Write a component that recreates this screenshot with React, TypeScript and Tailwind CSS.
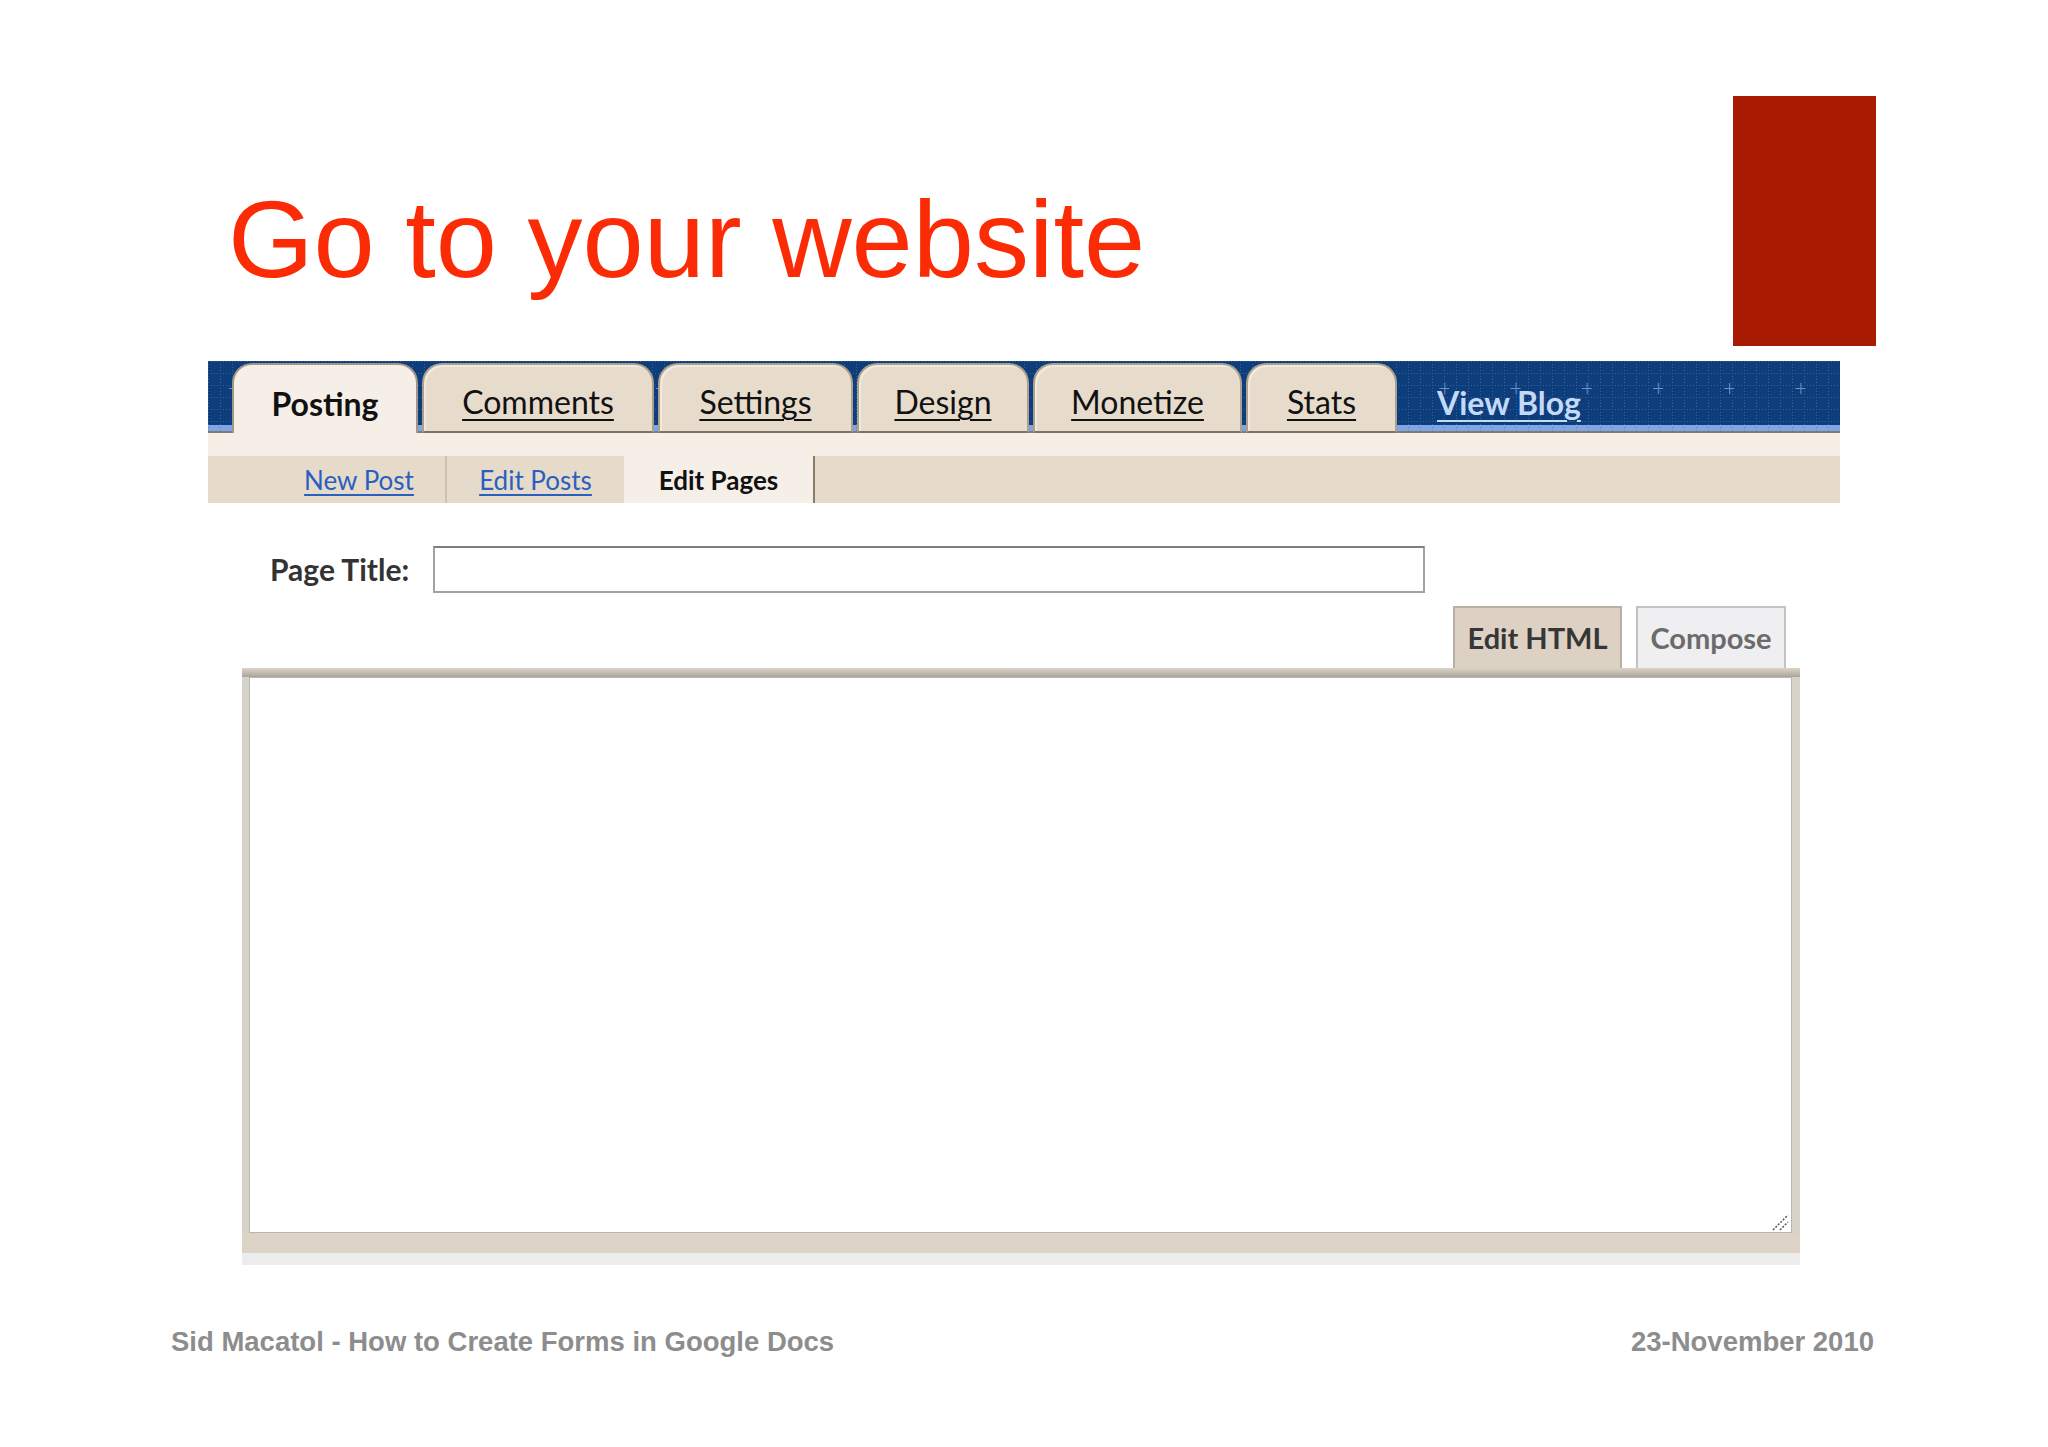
import type { ReactNode } from 'react';

const TABS = [
  { label: 'Posting', width: 'w-[186px]', active: true },
  { label: 'Comments', width: 'w-[232px]', active: false },
  { label: 'Settings', width: 'w-[195px]', active: false },
  { label: 'Design', width: 'w-[172px]', active: false },
  { label: 'Monetize', width: 'w-[209px]', active: false },
  { label: 'Stats', width: 'w-[151px]', active: false },
];

/**
 * Blue grid texture behind the top tabs
 */
function GridTexture() {
  return (
    <svg className="absolute inset-0 h-full w-full" aria-hidden="true">
      <defs>
        <pattern id="grid" width="12" height="12" patternUnits="userSpaceOnUse">
          <path d="M0 0.5H12M0.5 0V12" stroke="#4a74ad" strokeWidth="1" strokeDasharray="1 2" opacity="0.7" />
        </pattern>
        <pattern id="plus" x="13" y="0" width="71.2" height="72" patternUnits="userSpaceOnUse">
          <path d="M8 27.5H18M13.5 22V33" stroke="#6f93c6" strokeWidth="1" />
        </pattern>
      </defs>
      <rect width="100%" height="100%" fill="url(#grid)" />
      <rect width="100%" height="100%" fill="url(#plus)" />
    </svg>
  );
}

function Tab({ label, width, active }: { label: string; width: string; active: boolean }) {
  if (active) {
    return (
      <div
        className={`relative z-10 ${width} flex h-[70px] items-center justify-center rounded-t-[20px] border-2 border-b-0 border-[#a39684] bg-[#f6efe8] pt-[10px] text-[32px] font-bold text-[#111]`}
      >
        {label}
      </div>
    );
  }
  return (
    <div
      className={`relative z-10 ${width} flex h-[70px] items-center justify-center rounded-t-[20px] border-2 border-[#ab9f8d] border-b-[#7d7263] bg-[#e7dccc] pt-[8px] text-[32px] text-[#111] shadow-[inset_2px_2px_0_#f1e9de]`}
    >
      <span className="underline decoration-2 underline-offset-[5px]">{label}</span>
    </div>
  );
}

function SubItem({ className, children }: { className: string; children: ReactNode }) {
  return <div className={`flex h-full items-center justify-center ${className}`}>{children}</div>;
}

export default function App() {
  return (
    <div className="relative h-[1447px] w-[2048px] overflow-hidden bg-white">
      {/* Slide title + red block */}
      <div className="flex h-[361px]">
        <h1 className="pl-[228px] pt-[184px] font-['Liberation_Sans',Arial,sans-serif] text-[110px] font-normal leading-none text-[#fb2c05]">
          Go to your website
        </h1>
        <div className="ml-auto mr-[172px] mt-[96px] h-[250px] w-[143px] bg-[#a91a03]" />
      </div>

      <div className="font-['Lato','DejaVu_Sans',sans-serif]">
        {/* Blue tab bar */}
        <div className="relative ml-[208px] h-[72px] w-[1632px] bg-[#0e3d7c] [background-image:linear-gradient(to_top,#857a6c_0,#857a6c_2px,#7ea6e6_2px,#7ea6e6_8px,transparent_8px)]">
          <GridTexture />
          <div className="relative flex h-full items-end gap-[4px] pl-[24px]">
            {TABS.map((t) => (
              <Tab key={t.label} {...t} />
            ))}
            <a className="relative z-10 mb-[14px] ml-[36px] text-[32px] font-bold leading-none text-[#c3daf6] underline decoration-2 underline-offset-[5px]">
              View Blog
            </a>
          </div>
        </div>

        {/* Light strip */}
        <div className="ml-[208px] h-[23px] w-[1632px] bg-[#f6efe8]" />

        {/* Sub navigation */}
        <div className="ml-[208px] flex h-[47px] w-[1632px] items-stretch bg-[#e6dbcb] text-[26px] leading-none">
          <SubItem className="w-[239px] border-r-2 border-[#cdc0ae] pl-[65px] text-[#2b5fbf]">
            <span className="underline underline-offset-[4px]">New Post</span>
          </SubItem>
          <SubItem className="w-[177px] text-[#2b5fbf]">
            <span className="underline underline-offset-[4px]">Edit Posts</span>
          </SubItem>
          <SubItem className="w-[191px] border-r-2 border-[#8a7b67] bg-[#f6efe8] font-bold text-[#111]">
            Edit Pages
          </SubItem>
        </div>

        {/* Page title row */}
        <div className="mt-[43px] flex items-center">
          <label className="ml-[270px] w-[163px] text-[30px] font-bold text-[#333]">Page Title:</label>
          <div className="h-[47px] w-[992px] border-2 border-[#a3a3a3] border-t-[#7e7e7e] bg-white" />
        </div>

        {/* Editor mode buttons */}
        <div className="mt-[13px] flex justify-end gap-[14px] pr-[262px]">
          <div className="flex h-[62px] w-[169px] items-center justify-center border-2 border-b-0 border-[#b9b0a4] bg-[#ddd1c3] text-[29px] font-bold text-[#363636]">
            Edit HTML
          </div>
          <div className="flex h-[62px] w-[150px] items-center justify-center border-2 border-b-0 border-[#c4c2c2] bg-[#efeef0] text-[29px] font-bold text-[#6b6b6b]">
            Compose
          </div>
        </div>

        {/* Editor box */}
        <div className="ml-[242px] w-[1558px]">
          <div className="bg-[#d6d1c9] pl-[7px] pr-[8px] pt-[9px] [background-image:linear-gradient(#ddd4c8,#a9a49c_9px,transparent_9px)]">
            <div className="relative h-[556px] border border-[#b9b6b0] bg-white">
              <svg className="absolute bottom-[1px] right-[2px] h-[18px] w-[18px]" viewBox="0 0 18 18" aria-hidden="true">
                <path d="M2 17L17 2M9 17L17 9" stroke="#555" strokeWidth="1.5" strokeDasharray="2 1.5" />
              </svg>
            </div>
          </div>
          <div className="h-[20px] bg-[#ddd3c6]" />
          <div className="h-[12px] bg-[#ededed]" />
        </div>
      </div>

      {/* Footer */}
      <div className="mt-[63px] flex justify-between pl-[171px] pr-[174px] font-['Liberation_Sans',Arial,sans-serif] text-[27.5px] font-bold leading-none text-[#8d8d8d]">
        <span>Sid Macatol - How to Create Forms in Google Docs</span>
        <span>23-November 2010</span>
      </div>
    </div>
  );
}
